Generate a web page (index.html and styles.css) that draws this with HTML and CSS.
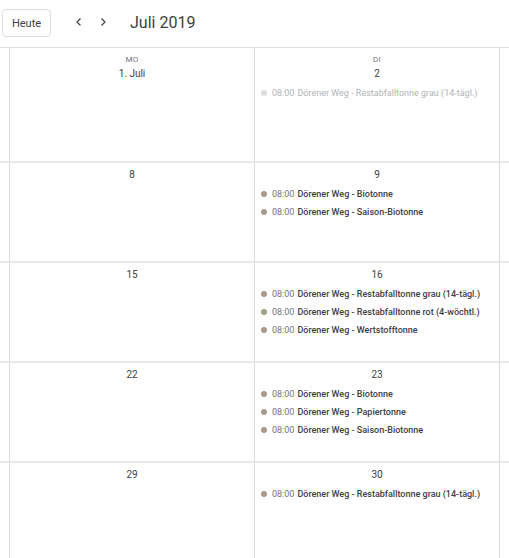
FILE: index.html
```html
<!DOCTYPE html>
<html lang="de">
<head>
<meta charset="utf-8">
<title>Juli 2019</title>
<link rel="stylesheet" href="styles.css">
</head>
<body>
<header class="toolbar">
  <button class="today">Heute</button>
  <div class="nav">
    <span class="chev"><svg width="10" height="10" viewBox="0 0 10 10"><path d="M6.5 1.5 3 5l3.5 3.5" fill="none" stroke="#3c4043" stroke-width="1.2"/></svg></span>
    <span class="chev"><svg width="10" height="10" viewBox="0 0 10 10"><path d="M3.5 1.5 7 5 3.5 8.5" fill="none" stroke="#3c4043" stroke-width="1.2"/></svg></span>
  </div>
  <h1 class="title">Juli 2019</h1>
</header>
<main class="grid">
  <div class="cell edge"></div>
  <div class="cell">
    <div class="dow">MO</div>
    <div class="date">1. Juli</div>
  </div>
  <div class="cell">
    <div class="dow">DI</div>
    <div class="date">2</div>
    <div class="event past"><span class="dot"></span><span class="time">08:00</span> <span class="name">Dörener Weg - Restabfalltonne grau (14-tägl.)</span></div>
  </div>
  <div class="cell"></div>

  <div class="cell edge"></div>
  <div class="cell"><div class="date">8</div></div>
  <div class="cell">
    <div class="date">9</div>
    <div class="event"><span class="dot"></span><span class="time">08:00</span> <span class="name">Dörener Weg - Biotonne</span></div>
    <div class="event"><span class="dot"></span><span class="time">08:00</span> <span class="name">Dörener Weg - Saison-Biotonne</span></div>
  </div>
  <div class="cell"></div>

  <div class="cell edge"></div>
  <div class="cell"><div class="date">15</div></div>
  <div class="cell">
    <div class="date">16</div>
    <div class="event"><span class="dot"></span><span class="time">08:00</span> <span class="name">Dörener Weg - Restabfalltonne grau (14-tägl.)</span></div>
    <div class="event"><span class="dot"></span><span class="time">08:00</span> <span class="name">Dörener Weg - Restabfalltonne rot (4-wöchtl.)</span></div>
    <div class="event"><span class="dot"></span><span class="time">08:00</span> <span class="name">Dörener Weg - Wertstofftonne</span></div>
  </div>
  <div class="cell"></div>

  <div class="cell edge"></div>
  <div class="cell"><div class="date">22</div></div>
  <div class="cell">
    <div class="date">23</div>
    <div class="event"><span class="dot"></span><span class="time">08:00</span> <span class="name">Dörener Weg - Biotonne</span></div>
    <div class="event"><span class="dot"></span><span class="time">08:00</span> <span class="name">Dörener Weg - Papiertonne</span></div>
    <div class="event"><span class="dot"></span><span class="time">08:00</span> <span class="name">Dörener Weg - Saison-Biotonne</span></div>
  </div>
  <div class="cell"></div>

  <div class="cell edge"></div>
  <div class="cell"><div class="date">29</div></div>
  <div class="cell">
    <div class="date">30</div>
    <div class="event"><span class="dot"></span><span class="time">08:00</span> <span class="name">Dörener Weg - Restabfalltonne grau (14-tägl.)</span></div>
  </div>
  <div class="cell"></div>
</main>
</body>
</html>
```
FILE: styles.css
```css
html, body {
  margin: 0;
  padding: 0;
  background: #fff;
  overflow: hidden;
}
body {
  font-family: Roboto, "Noto Sans", Arial, sans-serif;
  color: #3c4043;
  width: 509px;
  height: 558px;
}
.toolbar {
  display: flex;
  align-items: center;
  box-sizing: border-box;
  height: 48px;
  border-bottom: 1px solid #dadce0;
  padding-left: 2px;
  padding-bottom: 3px;
}
.today {
  width: 49px;
  height: 28px;
  border: 1px solid #dadce0;
  border-radius: 4px;
  background: #fff;
  font-family: Roboto, Arial, sans-serif;
  font-size: 11px;
  color: #3c4043;
  padding: 0;
  margin-top: 2px;
}
.nav {
  display: flex;
  gap: 14px;
  margin-left: 23px;
}
.chev {
  display: flex;
  width: 10px;
  height: 10px;
}
.title {
  margin: 0 0 0 22px;
  font-size: 16px;
  font-weight: 400;
  color: #3c4043;
}
.grid {
  display: grid;
  grid-template-columns: 9px 245px 245px 1fr;
  grid-template-rows: 115px repeat(4, 100px);
}
.cell {
  border-left: 1px solid #dadce0;
  border-bottom: 2px solid #e8e8e8;
  box-sizing: border-box;
  padding-top: 6px;
  overflow: hidden;
}
.cell.edge {
  border-left: none;
}
.dow {
  text-align: center;
  font-size: 8px;
  color: #70757a;
  line-height: 10px;
  letter-spacing: 0.3px;
  padding-top: 1px;
}
.date {
  text-align: center;
  font-size: 10px;
  line-height: 12px;
  color: #3c4043;
}
.dow + .date {
  margin-top: 3px;
}
.event {
  display: flex;
  align-items: center;
  height: 18px;
  padding-left: 6px;
  font-size: 9px;
  white-space: nowrap;
}
.date + .event {
  margin-top: 4px;
}
.dot {
  width: 6px;
  height: 6px;
  border-radius: 50%;
  background: #a79b8e;
  margin-right: 5px;
  flex: none;
}
.time {
  color: #70757a;
  margin-right: 3px;
}
.name {
  color: #3c4043;
  font-weight: 500;
}
.past .dot { background: #dcdcdc; }
.past .time, .past .name { color: #b0b3b6; font-weight: 400; }
```
